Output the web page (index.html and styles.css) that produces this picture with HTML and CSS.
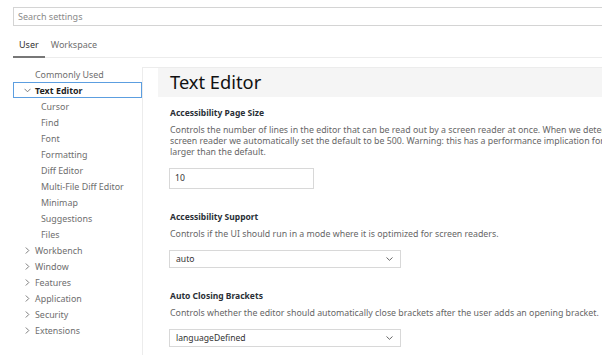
FILE: index.html
```html
<!DOCTYPE html>
<html lang="en">
<head>
    <meta charset="UTF-8">
    <meta name="viewport" content="width=device-width, initial-scale=1.0">
    <title>Settings</title>
    <link rel="stylesheet" href="styles.css">
</head>
<body>
    <div class="settings">
        <div class="search">Search settings</div>

        <div class="tabs">
            <div class="tab activo">User</div>
            <div class="tab">Workspace</div>
        </div>

        <div class="principal">
            <div class="indice">
                <div class="fila">Commonly Used</div>
                <div class="fila seleccionada">
                    <svg class="chevron" width="7" height="5" viewBox="0 0 7 5"><polyline points="0.5,0.8 3.5,3.8 6.5,0.8" /></svg>
                    Text Editor
                </div>
                <div class="fila hijo">Cursor</div>
                <div class="fila hijo">Find</div>
                <div class="fila hijo">Font</div>
                <div class="fila hijo">Formatting</div>
                <div class="fila hijo">Diff Editor</div>
                <div class="fila hijo">Multi-File Diff Editor</div>
                <div class="fila hijo">Minimap</div>
                <div class="fila hijo">Suggestions</div>
                <div class="fila hijo">Files</div>
                <div class="fila"><svg class="chevron" width="5" height="7" viewBox="0 0 5 7"><polyline points="0.8,0.5 3.8,3.5 0.8,6.5" /></svg>Workbench</div>
                <div class="fila"><svg class="chevron" width="5" height="7" viewBox="0 0 5 7"><polyline points="0.8,0.5 3.8,3.5 0.8,6.5" /></svg>Window</div>
                <div class="fila"><svg class="chevron" width="5" height="7" viewBox="0 0 5 7"><polyline points="0.8,0.5 3.8,3.5 0.8,6.5" /></svg>Features</div>
                <div class="fila"><svg class="chevron" width="5" height="7" viewBox="0 0 5 7"><polyline points="0.8,0.5 3.8,3.5 0.8,6.5" /></svg>Application</div>
                <div class="fila"><svg class="chevron" width="5" height="7" viewBox="0 0 5 7"><polyline points="0.8,0.5 3.8,3.5 0.8,6.5" /></svg>Security</div>
                <div class="fila"><svg class="chevron" width="5" height="7" viewBox="0 0 5 7"><polyline points="0.8,0.5 3.8,3.5 0.8,6.5" /></svg>Extensions</div>
            </div>

            <div class="contenido">
                <div class="cabecera">Text Editor</div>

                <div class="ajuste">
                    <div class="titulo">Accessibility Page Size</div>
                    <div class="descripcion">Controls the number of lines in the editor that can be read out by a screen reader at once. When we detect a<br>screen reader we automatically set the default to be 500. Warning: this has a performance implication for numbers<br>larger than the default.</div>
                    <div class="entrada">10</div>
                </div>

                <div class="ajuste">
                    <div class="titulo">Accessibility Support</div>
                    <div class="descripcion">Controls if the UI should run in a mode where it is optimized for screen readers.</div>
                    <div class="selector">
                        <span>auto</span>
                        <svg width="7" height="4" viewBox="0 0 7 4"><polyline points="0.5,0.5 3.5,3.3 6.5,0.5" /></svg>
                    </div>
                </div>

                <div class="ajuste">
                    <div class="titulo">Auto Closing Brackets</div>
                    <div class="descripcion">Controls whether the editor should automatically close brackets after the user adds an opening bracket.</div>
                    <div class="selector">
                        <span>languageDefined</span>
                        <svg width="7" height="4" viewBox="0 0 7 4"><polyline points="0.5,0.5 3.5,3.3 6.5,0.5" /></svg>
                    </div>
                </div>
            </div>
        </div>
    </div>
</body>
</html>
```

FILE: styles.css
```css
html, body {
    margin: 0;
    padding: 0;
    overflow: hidden;
    background-color: white;
}

body {
    font-family: "Noto Sans", "Open Sans", sans-serif;
    color: #616161;
    width: 602px;
    height: 355px;
}

.settings {
    width: 760px;
    padding-left: 13px;
}

.search {
    margin-top: 7px;
    height: 19px;
    box-sizing: border-box;
    border: 1px solid #d4d4d4;
    padding-left: 4px;
    font-size: 9px;
    line-height: 17px;
    color: #8a8a8a;
}

.tabs {
    display: flex;
    align-items: flex-start;
    height: 31px;
    border-bottom: 1px solid #ececec;
}

.tab {
    padding: 12px 6px 4px 6px;
    font-size: 9px;
    line-height: 14px;
    color: #707070;
    border-bottom: 2px solid transparent;
}

.tab.activo {
    color: #333;
    border-bottom-color: #777;
}

.principal {
    display: flex;
    margin-top: 8px;
}

.indice {
    width: 129px;
    flex-shrink: 0;
}

.fila {
    display: flex;
    align-items: center;
    height: 16px;
    box-sizing: border-box;
    padding-left: 22px;
    font-size: 8.9px;
    color: #6e6e6e;
    white-space: nowrap;
    position: relative;
}

.fila .chevron {
    position: absolute;
    left: 12px;
    top: 4.5px;
    fill: none;
    stroke: #6e6e6e;
    stroke-width: 0.9;
}

.fila.seleccionada {
    border: 1px solid #5c9ee0;
    padding-left: 21px;
    font-weight: bold;
    color: #1f1f1f;
}

.fila.seleccionada .chevron {
    left: 10px;
    top: 5px;
}

.fila.hijo {
    padding-left: 28px;
}

.contenido {
    flex: 1;
    margin-top: 1px;
    border-left: 1px solid #ececec;
    border-top: 1px solid #ececec;
    padding-left: 15px;
    height: 300px;
}

.cabecera {
    background-color: #f5f5f5;
    height: 29px;
    padding-left: 12px;
    font-size: 18.3px;
    line-height: 28px;
    color: #111;
}

.ajuste {
    padding: 9px 0 0 12px;
    white-space: nowrap;
}

.titulo {
    font-size: 8.5px;
    line-height: 14px;
    font-weight: bold;
    color: #2a2f36;
    margin-bottom: 5px;
}

.descripcion {
    font-size: 8.8px;
    line-height: 11px;
    color: #666;
    margin-bottom: 10px;
}

.entrada, .selector {
    box-sizing: border-box;
    border: 1px solid #d8d8d8;
    margin-left: -1px;
    font-size: 8.6px;
    color: #333;
    padding-left: 5px;
    margin-bottom: 12px;
}

.entrada {
    width: 145px;
    height: 21px;
    line-height: 19px;
}

.selector {
    width: 232px;
    height: 18px;
    line-height: 16px;
    display: flex;
    justify-content: space-between;
    align-items: center;
    padding-right: 7px;
    padding-left: 6px;
}

.selector svg {
    fill: none;
    stroke: #555;
    stroke-width: 0.9;
}
```
